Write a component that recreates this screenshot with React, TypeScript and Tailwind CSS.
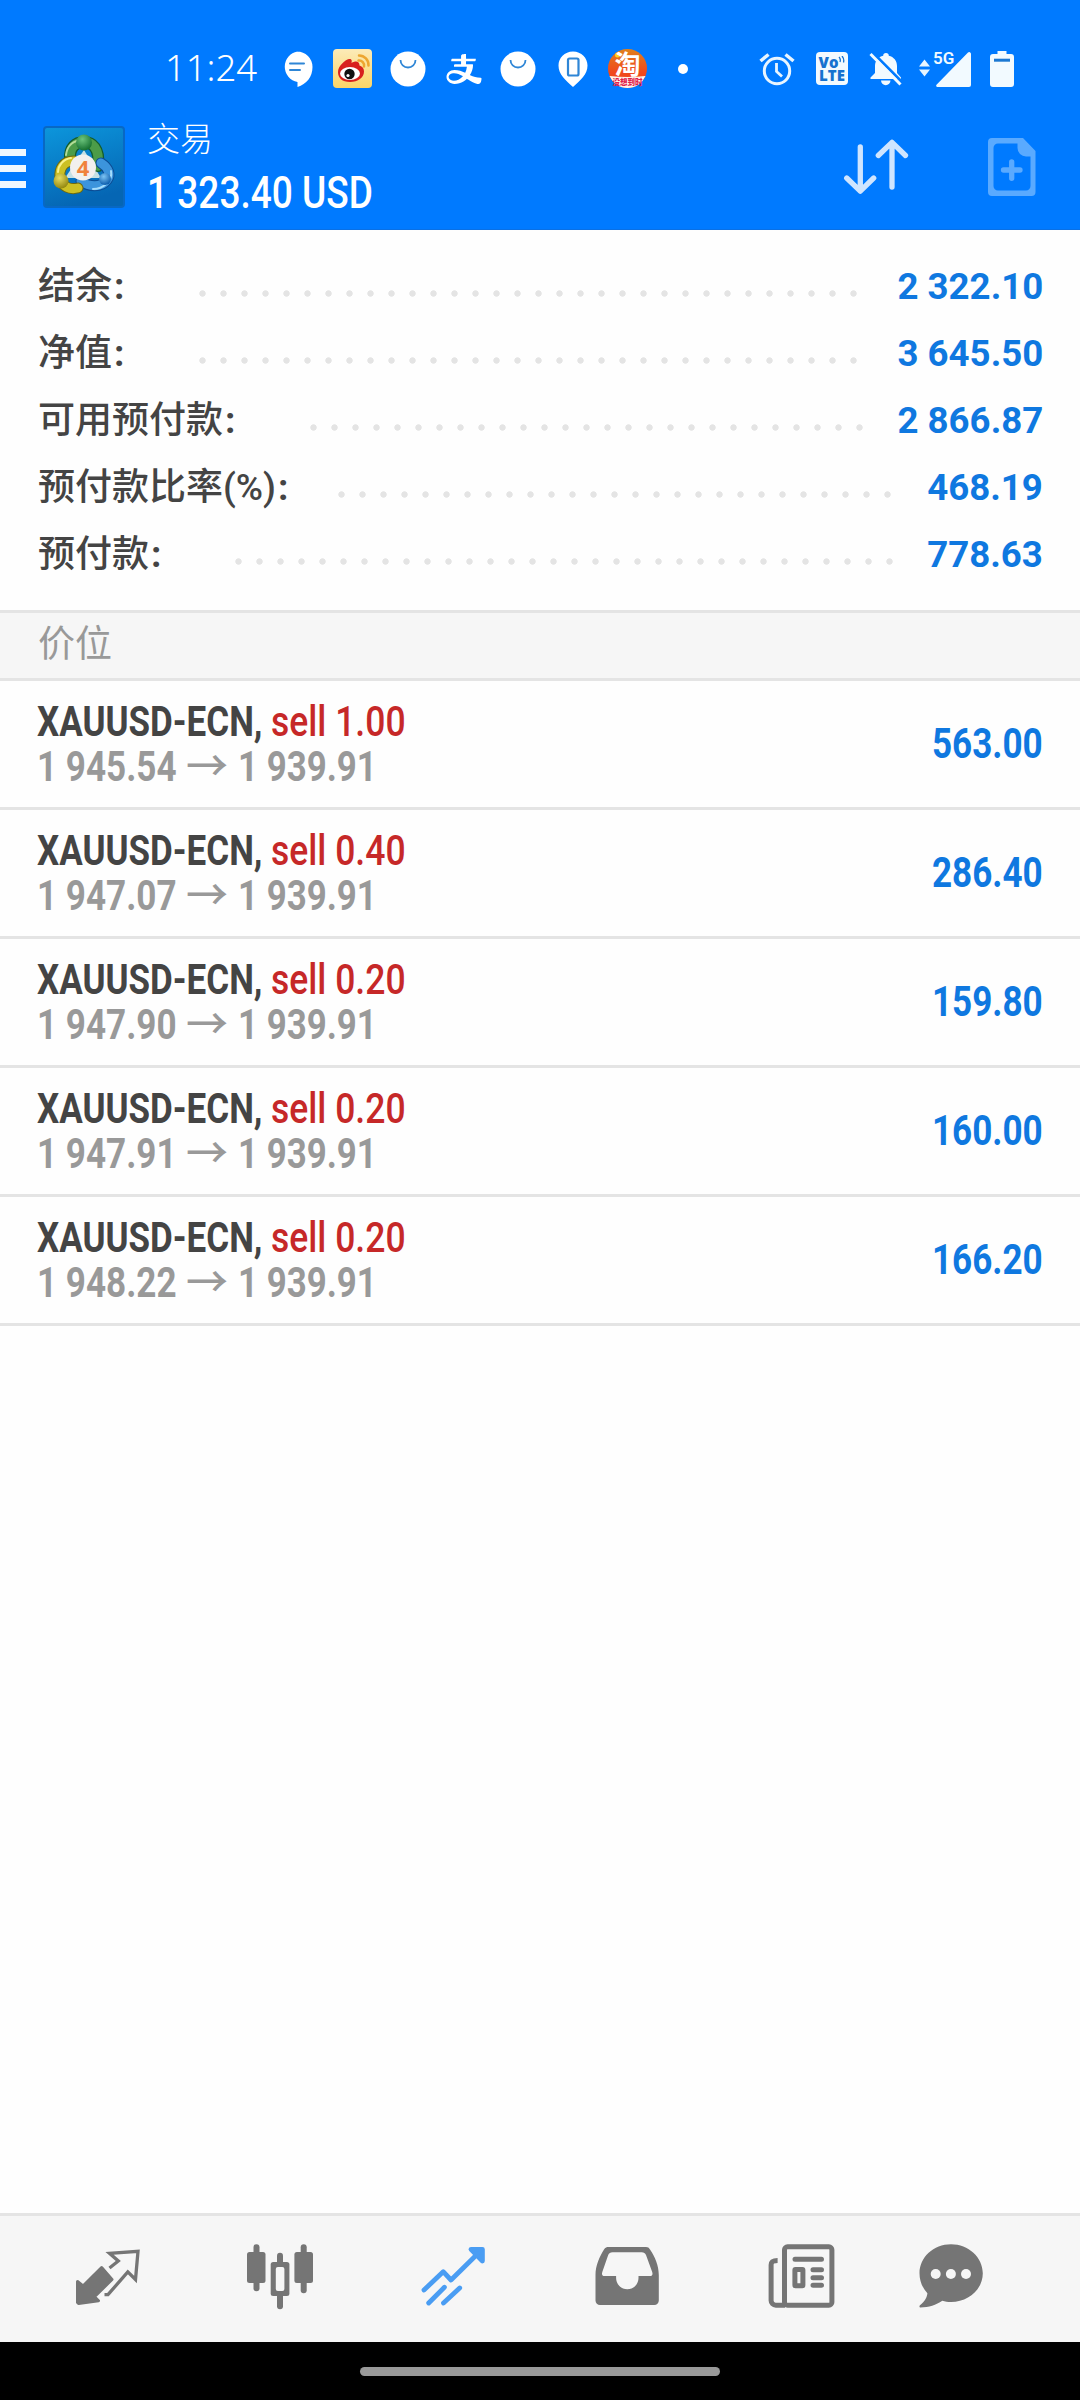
import React from "react";
import { AiOutlineAlipay } from "react-icons/ai";

interface ISummary {
  label: string;
  value: string;
  dots: string;
}

interface IPosition {
  volume: string;
  open: string;
  profit: string;
}

const summary: ISummary[] = [
  { label: "结余", value: "2 322.10", dots: "ml-[68px] w-[672px]" },
  { label: "净值", value: "3 645.50", dots: "ml-[68px] w-[672px]" },
  { label: "可用预付款", value: "2 866.87", dots: "ml-[68px] w-[567px]" },
  { label: "预付款比率(%)", value: "468.19", dots: "ml-[43px] w-[567px]" },
  { label: "预付款", value: "778.63", dots: "ml-[67px] w-[672px]" },
];

const positions: IPosition[] = [
  { volume: "1.00", open: "1 945.54", profit: "563.00" },
  { volume: "0.40", open: "1 947.07", profit: "286.40" },
  { volume: "0.20", open: "1 947.90", profit: "159.80" },
  { volume: "0.20", open: "1 947.91", profit: "160.00" },
  { volume: "0.20", open: "1 948.22", profit: "166.20" },
];

const BallIcon = () => (
  <svg width="36" height="36" viewBox="0 0 36 36">
    <circle cx="18" cy="18" r="17.5" fill="#fff" />
    <path d="M10.500 9a7.500 7.500 0 0 0 15 0" fill="none" stroke="#2f86d6" strokeWidth="1.800" />
  </svg>
);

const StatusSlot = ({ children }: { children: React.ReactNode }) => (
  <div className="flex w-[55px] shrink-0 items-center justify-center">{children}</div>
);

const StatusBar = () => (
  <div className="flex h-[92px] items-start pt-[49px] font-['Noto_Sans','Noto_Sans_CJK_SC',sans-serif] text-white">
    <div className="flex h-[39px] w-full items-center">
      <span className="-mt-[4px] ml-[165px] w-[105px] origin-left scale-x-[0.985] text-[37px] leading-none font-[350]">11:24</span>
      <StatusSlot>
        <svg className="-ml-[2px]" width="32" height="36" viewBox="0 0 32 36">
          <path d="M16 0.500a15.500 15.500 0 0 1 15.500 15.500c0 10-6 17-15 20v-5a15.500 15.500 0 0 1 0-30.500z" fill="#fff" />
          <path d="M9 12.500h14M9 19h10" stroke="#2f86d6" strokeWidth="2" strokeLinecap="round" />
        </svg>
      </StatusSlot>
      <StatusSlot>
        <svg width="39" height="39" viewBox="0 0 39 39">
          <defs>
            <linearGradient id="paper" x1="0" y1="0" x2="0" y2="1">
              <stop offset="0" stopColor="#fcebb8" />
              <stop offset="1" stopColor="#fbd568" />
            </linearGradient>
          </defs>
          <rect width="39" height="39" rx="4" fill="url(#paper)" />
          <path d="M5 23c0-6 7-12 11-13 3-.5 3 2 2.500 4 4-2.500 8-2 8 2.500 3 1 4.500 3 4.500 6 0 6-6 10.500-14 10.500S5 29 5 23z" fill="#d8201e" />
          <ellipse cx="17" cy="24.500" rx="10" ry="6.500" fill="#fff" />
          <circle cx="16.500" cy="25" r="5.200" fill="#111" />
          <circle cx="15" cy="26.500" r="1.600" fill="#fff" />
          <path d="M25.500 11.500a5 5 0 0 1 5.500 6M26 6.500a9.500 9.500 0 0 1 9.500 10" fill="none" stroke="#eda630" strokeWidth="2.500" strokeLinecap="round" />
        </svg>
      </StatusSlot>
      <StatusSlot>
        <BallIcon />
      </StatusSlot>
      <StatusSlot>
        <AiOutlineAlipay className="mt-[1px] ml-[2px] h-[40px] w-[40px]" />
      </StatusSlot>
      <StatusSlot>
        <BallIcon />
      </StatusSlot>
      <StatusSlot>
        <svg width="30" height="36" viewBox="0 0 30 36">
          <path d="M15 0.500C6.500 0.500 0.500 7 0.500 14.500c0 9 7 14.500 14.500 21.500 7.500-7 14.500-12.500 14.500-21.500C29.500 7 23.500 0.500 15 0.500z" fill="#fff" />
          <rect x="10" y="7.500" width="10.500" height="17" rx="1.500" fill="none" stroke="#2f86d6" strokeWidth="2.200" />
        </svg>
      </StatusSlot>
      <StatusSlot>
        <svg className="overflow-visible" width="39" height="39" viewBox="0 0 39 39">
          <defs>
            <linearGradient id="orange" x1="0" y1="0" x2="0" y2="1">
              <stop offset="0" stopColor="#e0801c" />
              <stop offset="0.600" stopColor="#f0481c" />
            </linearGradient>
          </defs>
          <circle cx="19.500" cy="19.500" r="19.500" fill="url(#orange)" />
          <path d="M1.500 27Q19.500 29 37.500 27A19.500 19.500 0 0 1 1.500 27z" fill="#fff3ea" />
          <circle cx="9.500" cy="6" r="2.500" fill="#ffd21c" />
          <text x="19.500" y="24.500" textAnchor="middle" fill="#fff" fontSize="26" fontWeight="700" fontFamily="Noto Sans CJK SC, sans-serif">
            淘
          </text>
          <text x="19.500" y="36" textAnchor="middle" fill="#e0204a" fontSize="7.500" fontWeight="900" fontFamily="Noto Sans CJK SC, sans-serif">
            没想到时
          </text>
        </svg>
      </StatusSlot>
      <StatusSlot>
        <span className="h-[10px] w-[10px] rounded-full bg-white" />
      </StatusSlot>
      <svg className="ml-[49px] shrink-0" width="36" height="34" viewBox="0 0 36 34">
        <g fill="none" stroke="#e8f5ff">
          <circle cx="18" cy="19" r="12.700" strokeWidth="3" />
          <path d="M17.500 11v8.500l5.500 5" strokeWidth="2.800" />
          <path d="M1.500 9l8-6.500M34.500 9l-8-6.500" strokeWidth="3.500" />
        </g>
      </svg>
      <div className="ml-[21px] flex h-[33px] w-[32px] shrink-0 flex-col items-center justify-center rounded-[4px] bg-[#f2faff] font-['Open_Sans',sans-serif] text-[15px] leading-[13px] font-extrabold text-[#1672cf]">
        <span className="flex items-start">
          Vo
          <svg width="7" height="7" viewBox="0 0 7 7">
            <path d="M1 1q2 2 1 5M4 0q2.500 3 1.500 6.500" fill="none" stroke="currentColor" strokeWidth="1.300" />
          </svg>
        </span>
        <span>LTE</span>
      </div>
      <svg className="ml-[21px] shrink-0" width="34" height="34" viewBox="0 0 34 34">
        <path d="M17 1c1.800 0 2.800 1 2.800 2.800 5 1.200 8.200 5 8.200 10.200v7l4 4.500v1.500H1.500v-1.500L6 21v-7c0-5.200 3.500-9 8.200-10.200C14.200 2 15.200 1 17 1z" fill="#f2faff" />
        <path d="M12 28.500h9.500a4.700 4.700 0 0 1-9.500 0z" fill="#f2faff" />
        <path d="M3 0l31 31" stroke="#007aff" strokeWidth="3" />
        <path d="M1.500 2l30 30.500" stroke="#f2faff" strokeWidth="3" />
      </svg>
      <svg className="ml-[16px] shrink-0 overflow-visible" width="52" height="36" viewBox="0 0 52 36">
        <path d="M0 15.500l5.500-7 5.500 7zM0 18.500h11l-5.500 7z" fill="#e8f5ff" />
        <path d="M49 1.500a1.800 1.800 0 0 1 3 1.300V34a2 2 0 0 1-2 2H18.500a1.300 1.300 0 0 1-1-2.200z" fill="#f2faff" />
        <text x="14" y="13" fill="#f2faff" fontSize="17" fontWeight="600" fontFamily="Roboto, sans-serif">
          5G
        </text>
      </svg>
      <svg className="ml-[19px] shrink-0" width="24" height="36" viewBox="0 0 24 36">
        <path d="M7.500 0h9v3H21a3 3 0 0 1 3 3v27a3 3 0 0 1-3 3H3a3 3 0 0 1-3-3V6a3 3 0 0 1 3-3h4.500z" fill="#f2faff" />
        <path d="M4 9.200h16" stroke="#1c78d2" strokeWidth="3" />
      </svg>
    </div>
  </div>
);

const AppLogo = () => (
  <svg className="mt-[34px] ml-[17px] shrink-0" width="82" height="82" viewBox="0 0 82 82">
    <defs>
      <linearGradient id="tile" x1="0" y1="0" x2="0.300" y2="1">
        <stop offset="0" stopColor="#0c96dc" />
        <stop offset="1" stopColor="#0566b4" />
      </linearGradient>
      <radialGradient id="greenHead" cx="0.400" cy="0.300" r="0.700">
        <stop offset="0" stopColor="#6cc47c" />
        <stop offset="1" stopColor="#167030" />
      </radialGradient>
      <radialGradient id="goldHead" cx="0.400" cy="0.300" r="0.700">
        <stop offset="0" stopColor="#e8dc60" />
        <stop offset="1" stopColor="#948810" />
      </radialGradient>
      <radialGradient id="blueHead" cx="0.400" cy="0.300" r="0.700">
        <stop offset="0" stopColor="#7cc4f4" />
        <stop offset="1" stopColor="#0c5cac" />
      </radialGradient>
    </defs>
    <rect x="1" y="1" width="80" height="80" rx="3" fill="url(#tile)" stroke="#0868c4" strokeWidth="2" />
    <path d="M41 24l17 28H22z" fill="#c4e0e4" />
    <g fill="none" strokeLinecap="round">
      <path d="M27 34c-1-13 6-18 14-18s16 6 14 24" stroke="#145c2c" strokeWidth="12" />
      <path d="M27 34c-1-13 6-18 14-18s16 6 14 24" stroke="#4c9c48" strokeWidth="9.500" />
      <path d="M23 29c1-10 8-15 17-15" stroke="#b4dc98" strokeWidth="2" />
      <path d="M58 37c8 5 10 12 6 17-6 8-18 7-26 1" stroke="#0c4c94" strokeWidth="11" />
      <path d="M58 37c8 5 10 12 6 17-6 8-18 7-26 1" stroke="#3c94dc" strokeWidth="9" />
      <path d="M68 45c2 10-8 18-18 18" stroke="#a4dcfc" strokeWidth="2" />
      <path d="M31 35c-11 0-15 8-14 17 2 9 10 12 18 10" stroke="#6c6810" strokeWidth="11" />
      <path d="M31 35c-11 0-15 8-14 17 2 9 10 12 18 10" stroke="#ccc024" strokeWidth="9" />
      <path d="M28 32c-8 1-13 8-13 14" stroke="#f8f08c" strokeWidth="2" />
    </g>
    <circle cx="41" cy="16.500" r="8" fill="url(#greenHead)" />
    <circle cx="18" cy="55" r="7.500" fill="url(#goldHead)" />
    <circle cx="62" cy="53" r="6" fill="url(#blueHead)" />
    <circle cx="40" cy="41.500" r="13" fill="#f2f0ee" />
    <text x="40" y="49.500" textAnchor="middle" fill="#f0823c" fontSize="22" fontWeight="700" fontFamily="Open Sans, sans-serif">
      4
    </text>
  </svg>
);

const Header = () => (
  <div className="flex h-[137px] text-white">
    <div className="mt-[57px] flex flex-col gap-[9px]">
      <span className="h-[7px] w-[26px] bg-[#eef7ff]" />
      <span className="h-[7px] w-[26px] bg-[#eef7ff]" />
      <span className="h-[7px] w-[26px] bg-[#eef7ff]" />
    </div>
    <AppLogo />
    <div className="ml-[22px] w-[693px] shrink-0">
      <p className="mt-[25px] font-['Noto_Sans_CJK_SC',sans-serif] text-[33px] leading-[40px] font-light">交易</p>
      <p className="mt-[10px] origin-left scale-x-[0.842] text-[44px] leading-[52px] font-medium whitespace-nowrap">1 323.40 USD</p>
    </div>
    <svg className="mt-[46px] shrink-0" width="72" height="58" viewBox="0 0 72 58">
      <g fill="none" stroke="#cfe5ff" strokeWidth="5.300" strokeLinecap="round" strokeLinejoin="round">
        <path d="M20.300 9v44M6.700 40l13.600 13.200L33.700 40M52 49V4.500M38.300 17.500L52 4.300l13.500 13.200" />
      </g>
    </svg>
    <svg className="mt-[46px] ml-[76px] shrink-0" width="48" height="58" viewBox="0 0 48 58">
      <path
        fillRule="evenodd"
        fill="#5aaaff"
        d="M4 0h31l12.500 13v41a4 4 0 0 1-4 4H4a4 4 0 0 1-4-4V4a4 4 0 0 1 4-4zM10 5.500a4.500 4.500 0 0 0-4.500 4.500v38a4.500 4.500 0 0 0 4.500 4.500h28a4.500 4.500 0 0 0 4.500-4.500V18.500H38a8.500 8.500 0 0 1-8.500-8.500V5.500z"
      />
      <path d="M15.500 32h16.500M23.700 23.800v16.500" stroke="#5aaaff" strokeWidth="5.300" strokeLinecap="round" />
    </svg>
  </div>
);

const BottomBar = () => (
  <div className="flex h-[129px] shrink-0 items-start border-t-[3px] border-[#e4e4e4] bg-[#f6f6f6] text-[#757575]">
    {/* quotes */}
    <svg className="mt-[33px] ml-[75px] shrink-0" width="66" height="60" viewBox="0 0 66 60">
      <path
        d="M2.500 32.500l5.500 4.500 18.600-18.500L37 30.500 19.500 47.700l4 4-20 2.800-1-1z"
        fill="currentColor"
        stroke="currentColor"
        strokeWidth="3"
        strokeLinejoin="round"
      />
      <path d="M34.500 19l8.800-7-8.800-7.700L63 2.300 60.500 30.500l-7.700-7.700L33 45.700h-3.500" fill="none" stroke="currentColor" strokeWidth="3.300" />
    </svg>
    {/* charts */}
    <svg className="mt-[28px] ml-[106px] shrink-0" width="66" height="66" viewBox="0 0 66 66">
      <g fill="currentColor">
        <rect x="6.500" y="0.300" width="6" height="47" rx="3" />
        <rect y="8" width="18.500" height="31" rx="2.500" />
        <rect x="30" y="8.700" width="6" height="56.500" rx="3" />
        <rect x="23.700" y="18" width="18.700" height="34" rx="2.500" />
        <rect x="53.700" y="0.300" width="6" height="49" rx="3" />
        <rect x="47.400" y="8" width="18.600" height="31" rx="2.500" />
      </g>
      <rect x="28.800" y="23" width="8.600" height="24" rx="2" fill="#f6f6f6" />
    </svg>
    {/* trade */}
    <svg className="mt-[30px] ml-[108px] shrink-0" width="66" height="60" viewBox="0 0 66 60">
      <g fill="none" stroke="#4a9df3" strokeWidth="4.800" strokeLinecap="round" strokeLinejoin="round">
        <path d="M3 44l19.200-18.300L30 34 60 4.500M7.700 57l15.700-15.700M22.500 57l16.200-15" />
        <path d="M50 3.300h11.400v11.700z" fill="#4a9df3" />
      </g>
    </svg>
    {/* history */}
    <svg className="mt-[30px] ml-[108px] shrink-0" width="64" height="60" viewBox="0 0 64 60">
      <path
        fillRule="evenodd"
        fill="currentColor"
        d="M14 1h37c2 0 3 .8 4 2.500 5 7.500 8.800 16 8.800 25.500v25.500a4.500 4.500 0 0 1-4.500 4.500H5a4.500 4.500 0 0 1-4.500-4.500V29c0-9.500 4-18 8.500-25.500 1.300-2 2.500-2.500 5-2.500zM17.500 6.300c-2.300 0-3.300.9-4.300 2.700L7.300 26c-.8 2.500 0 4 2.200 4h11.600v2a11.200 11.200 0 0 0 22.400 0v-2h11.500c2.200 0 3-1.500 2.200-4L51 9c-1-1.800-2-2.700-4.300-2.700z"
      />
    </svg>
    {/* news */}
    <svg className="mt-[28px] ml-[109px] shrink-0" width="67" height="64" viewBox="0 0 67 64">
      <g fill="none" stroke="currentColor" strokeWidth="5">
        <rect x="16.500" y="2.800" width="47.400" height="58.400" rx="3" />
        <path d="M9.600 16.500c-4 0-6.500.5-6.500 4.500v35.500a4.700 4.700 0 0 0 4.700 4.700H17" />
        <path d="M27 15.300h26.500M45 25.700h8.500M45 33.700h8.500M45 41.300h8.500" strokeLinecap="round" />
        <rect x="26.900" y="25.500" width="8" height="16.300" rx="0.500" />
      </g>
    </svg>
    {/* messages */}
    <svg className="mt-[28px] ml-[84px] shrink-0" width="65" height="64" viewBox="0 0 65 64">
      <path
        d="M32 .2c17.500 0 31.800 13 31.800 29S49.500 58 32 58c-3.200 0-6-.4-8.700-1.200C17 61 9.500 63.600 1 63.500c-.8-.8-.7-1.500 0-2.200 5-4 7-7.800 7.400-12C3.500 44 .5 37 .5 29.200.5 13.200 14.500.2 32 .2z"
        fill="currentColor"
      />
      <circle cx="16.700" cy="30" r="5" fill="#f6f6f6" />
      <circle cx="31.900" cy="30" r="5" fill="#f6f6f6" />
      <circle cx="47" cy="30" r="5" fill="#f6f6f6" />
    </svg>
  </div>
);

const App = () => {
  return (
    <div className="flex h-[2400px] w-[1080px] flex-col overflow-hidden bg-[#fefefe] font-['Roboto','Noto_Sans_CJK_SC',sans-serif]">
      <div className="h-[230px] shrink-0 border-b border-[#0a70e4] bg-[#007aff]">
        <StatusBar />
        <Header />
      </div>
      <div className="h-[380px] shrink-0 pt-[23px]">
        {summary.map((row) => (
          <div key={row.label} className="flex h-[67px] items-center pr-[37px] pl-[38px]">
            <span className="mt-[1px] text-[37px] font-medium whitespace-nowrap text-[#444]">
              {row.label}
              <span className="ml-[2px] font-bold">:</span>
            </span>
            <div
              className={`mt-[14px] h-[7px] shrink-0 bg-[radial-gradient(circle,#e4e4e4_2.800px,transparent_3.600px)] bg-[length:21px_7px] ${row.dots}`}
            />
            <span className="ml-auto origin-right scale-x-[0.99] text-[37px] font-bold whitespace-nowrap text-[#0f78e0]">{row.value}</span>
          </div>
        ))}
      </div>
      <div className="flex h-[71px] shrink-0 items-center border-y-[3px] border-[#e4e4e4] bg-[#f6f6f6] pb-[2px] pl-[38px] text-[37px] text-[#999]">
        价位
      </div>
      <div className="flex-1">
        {positions.map((item) => (
          <div key={item.open} className="flex h-[129px] items-center justify-between border-b-[3px] border-[#e4e4e4] px-[37px]">
            <div className="text-[42px] leading-[45px] font-bold whitespace-nowrap">
              <div className="flex text-[#444]">
                <span className="w-[234px] origin-left scale-x-[0.833]">XAUUSD-ECN,</span>
                <span className="origin-left scale-x-[0.845] font-medium text-[#c62828]">sell {item.volume}</span>
              </div>
              <div className="flex text-[#999]">
                <span className="w-[149px] origin-left scale-x-[0.835]">{item.open}</span>
                <span className="w-[52px] font-medium">→</span>
                <span className="origin-left scale-x-[0.83]">1 939.91</span>
              </div>
            </div>
            <span className="-mt-[1px] origin-right scale-x-[0.835] text-[42px] font-bold text-[#0f78e0]">{item.profit}</span>
          </div>
        ))}
      </div>
      <BottomBar />
      <div className="flex h-[58px] shrink-0 items-center justify-center bg-black">
        <span className="h-[9px] w-[360px] rounded-full bg-[#999]" />
      </div>
    </div>
  );
};

export default App;
